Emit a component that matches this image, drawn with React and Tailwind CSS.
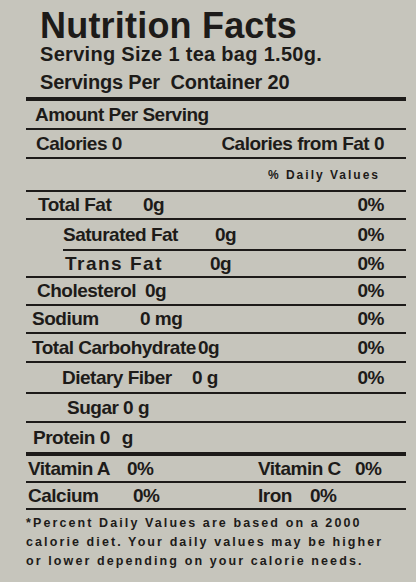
import React from "react";

function Row({ h, className = "", children }) {
  return (
    <div
      className={`flex items-center ${h} border-b-2 border-[#1d1b19] whitespace-nowrap ${className}`}
    >
      {children}
    </div>
  );
}

export default function App() {
  return (
    <div
      className="w-[416px] h-[582px] overflow-hidden bg-[#c6c5bc] text-[#1d1b19] font-bold"
      style={{ fontFamily: "'Liberation Sans', Arial, sans-serif" }}
    >
      <div className="pl-[40px] pt-[8px]">
        <div className="text-[36px] leading-[36px] tracking-[0.2px]">
          Nutrition Facts
        </div>
        <div className="text-[20px] leading-[20px] tracking-[0.3px]">
          Serving Size 1 tea bag 1.50g.
        </div>
        <div className="mt-[8px] text-[20px] leading-[20px] tracking-[-0.2px] whitespace-pre">
          Servings Per  Container 20
        </div>
      </div>

      <div className="mt-[5px] ml-[26px] w-[380px] border-t-4 border-[#1d1b19] text-[19px] leading-[22px] tracking-[-0.5px]">
        <Row h="h-[29px]" className="pl-[9px]">
          Amount Per Serving
        </Row>
        <Row h="h-[29px]" className="pl-[10px] pr-[22px] justify-between">
          <span>Calories 0</span>
          <span>Calories from Fat 0</span>
        </Row>
        <Row h="h-[33px]" className="justify-end pr-[26px]">
          <span className="text-[12px] leading-[12px] tracking-[2px]">
            % Daily Values
          </span>
        </Row>
        <Row h="h-[28px]" className="pl-[12px] pr-[22px]">
          <span className="w-[105px]">Total Fat</span>
          <span>0g</span>
          <span className="ml-auto">0%</span>
        </Row>
        <Row h="h-[31px]" className="ml-[37px] pr-[22px]">
          <span className="w-[152px]">Saturated Fat</span>
          <span>0g</span>
          <span className="ml-auto">0%</span>
        </Row>
        <Row h="h-[27px]" className="pl-[39px] pr-[22px]">
          <span className="w-[145px] tracking-[1.5px]">Trans Fat</span>
          <span>0g</span>
          <span className="ml-auto">0%</span>
        </Row>
        <Row h="h-[28px]" className="pl-[11px] pr-[22px]">
          <span className="w-[108px]">Cholesterol</span>
          <span>0g</span>
          <span className="ml-auto">0%</span>
        </Row>
        <Row h="h-[28px]" className="pl-[6px] pr-[22px]">
          <span className="w-[108px]">Sodium</span>
          <span>0 mg</span>
          <span className="ml-auto">0%</span>
        </Row>
        <Row h="h-[29px]" className="pl-[6px] pr-[22px]">
          <span className="w-[166px]">Total Carbohydrate</span>
          <span>0g</span>
          <span className="ml-auto">0%</span>
        </Row>
        <Row h="h-[31px]" className="pl-[36px] pr-[22px]">
          <span className="w-[130px]">Dietary Fiber</span>
          <span>0 g</span>
          <span className="ml-auto">0%</span>
        </Row>
        <Row h="h-[29px]" className="pl-[41px]">
          Sugar 0 g
        </Row>
        <div className="flex items-center h-[33px] border-b-4 border-[#1d1b19] pl-[7px]">
          <span>Protein 0</span>
          <span className="ml-[12px]">g</span>
        </div>
        <Row h="h-[27px]" className="pl-[2px]">
          <span className="w-[99px]">Vitamin A</span>
          <span className="w-[131px]">0%</span>
          <span className="w-[97px]">Vitamin C</span>
          <span>0%</span>
        </Row>
        <Row h="h-[27px]" className="pl-[2px]">
          <span className="w-[105px]">Calcium</span>
          <span className="w-[125px]">0%</span>
          <span className="w-[52px]">Iron</span>
          <span>0%</span>
        </Row>
        <div className="mt-[4px] text-[12.5px] leading-[19px] tracking-[2.1px] whitespace-nowrap">
          *Percent Daily Values are based on a 2000
          <br />
          calorie diet. Your daily values may be higher
          <br />
          or lower depending on your calorie needs.
        </div>
      </div>
    </div>
  );
}
